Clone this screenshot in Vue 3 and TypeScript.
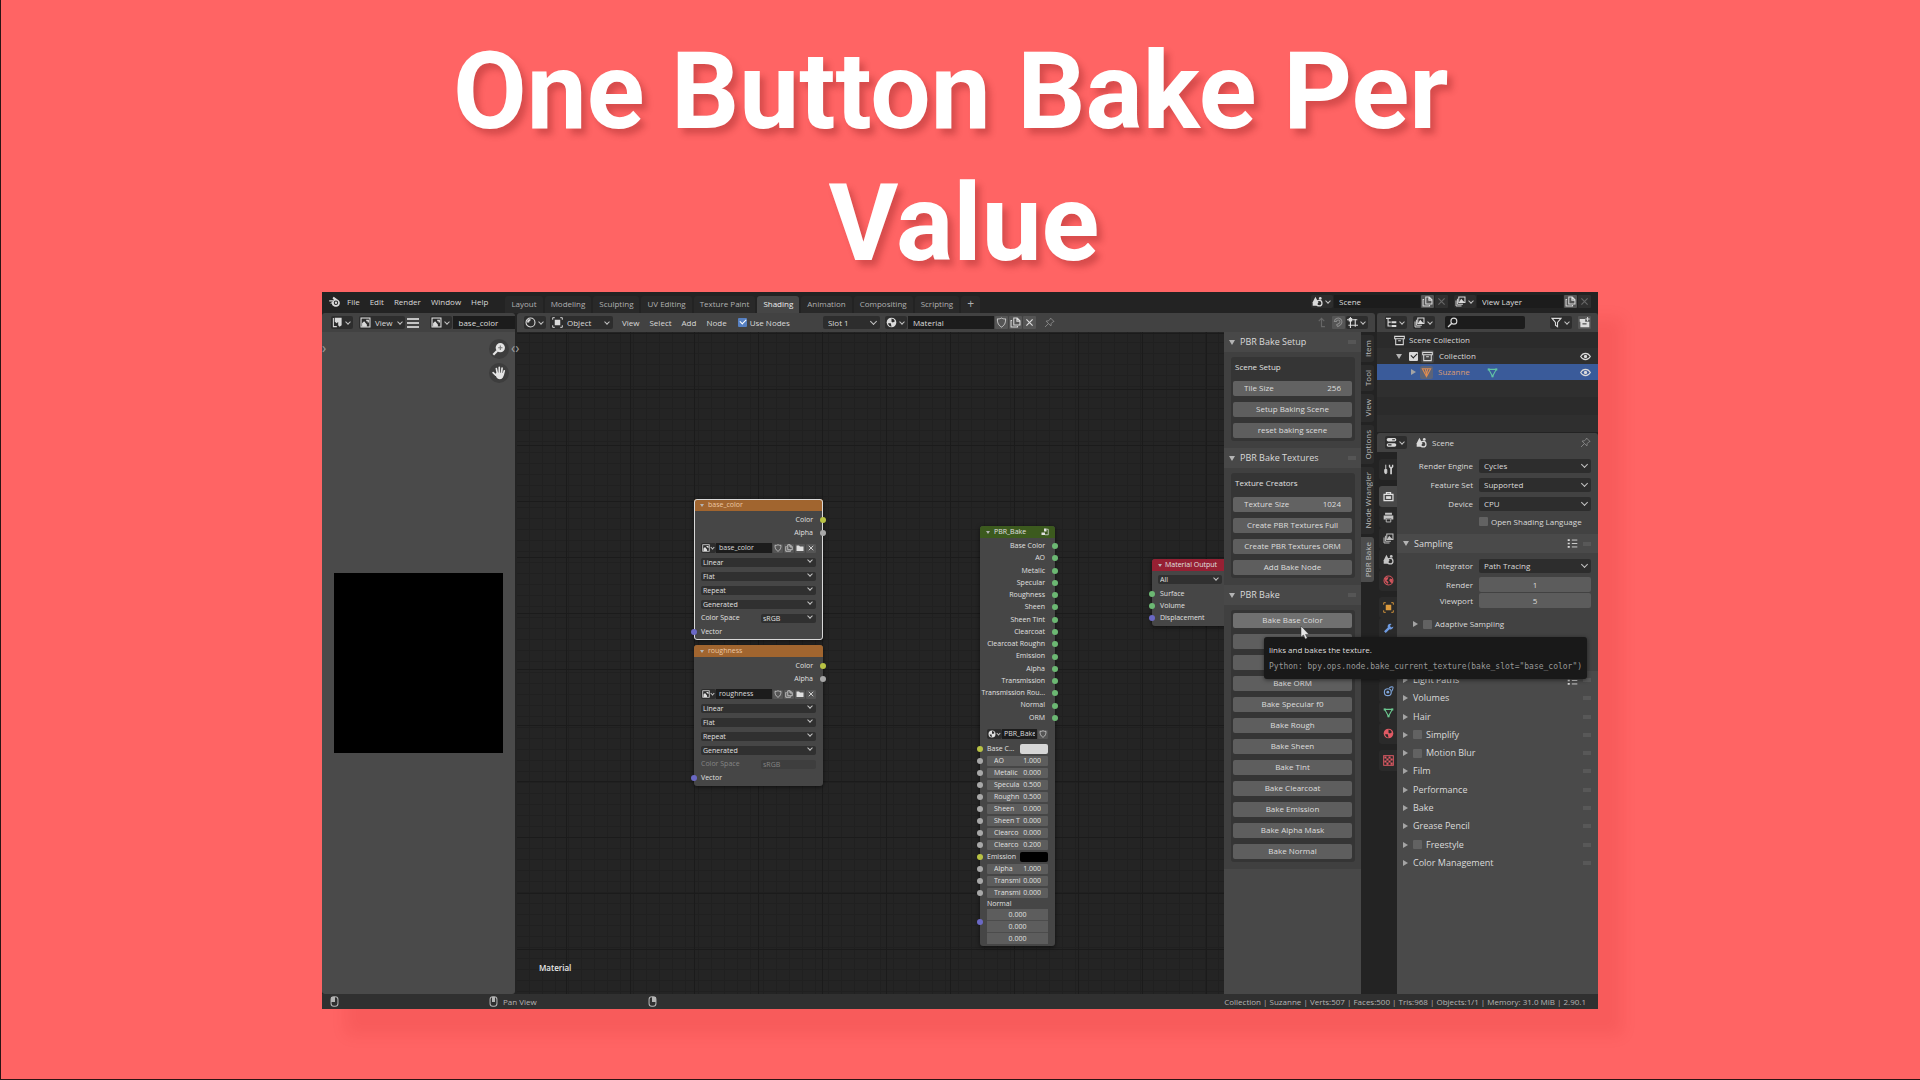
<script setup lang="ts">
import { ref } from 'vue'

interface Socket { label: string; value?: string; kind: 'value' | 'color' | 'link'; swatch?: string }
interface TextureNode { name: string; top: number; selected: boolean; space: boolean }
interface Section { label: string; check?: boolean; preset?: boolean }

const menus = ['File', 'Edit', 'Render', 'Window', 'Help']
const workspaces = ['Layout', 'Modeling', 'Sculpting', 'UV Editing', 'Texture Paint', 'Shading', 'Animation', 'Compositing', 'Scripting']
const nodeMenus = ['View', 'Select', 'Add', 'Node']
const sidebarTabs = ['Item', 'Tool', 'View', 'Options', 'Node Wrangler', 'PBR Bake']
const useNodes = ref(true)
const collectionOn = ref(true)

const textureNodes: TextureNode[] = [
  { name: 'base_color', top: 167, selected: true, space: true },
  { name: 'roughness', top: 313, selected: false, space: false },
]
const textureOptions = ['Linear', 'Flat', 'Repeat', 'Generated']

const bakeOutputs = ['Base Color', 'AO', 'Metalic', 'Specular', 'Roughness', 'Sheen', 'Sheen Tint', 'Clearcoat', 'Clearcoat Roughn', 'Emission', 'Alpha', 'Transmission', 'Transmission Rou...', 'Normal', 'ORM']
const bakeInputs: Socket[] = [
  { label: 'Base C...', kind: 'color', swatch: '#d6d6d6' },
  { label: 'AO', value: '1.000', kind: 'value' },
  { label: 'Metalic', value: '0.000', kind: 'value' },
  { label: 'Specula', value: '0.500', kind: 'value' },
  { label: 'Roughn', value: '0.500', kind: 'value' },
  { label: 'Sheen', value: '0.000', kind: 'value' },
  { label: 'Sheen T', value: '0.000', kind: 'value' },
  { label: 'Clearco', value: '0.000', kind: 'value' },
  { label: 'Clearco', value: '0.200', kind: 'value' },
  { label: 'Emission', kind: 'color', swatch: '#000000' },
  { label: 'Alpha', value: '1.000', kind: 'value' },
  { label: 'Transmi', value: '0.000', kind: 'value' },
  { label: 'Transmi', value: '0.000', kind: 'value' },
]
const outputInputs = [
  { label: 'Surface', color: 'green' },
  { label: 'Volume', color: 'green' },
  { label: 'Displacement', color: 'purple' },
]

const bakeButtons = ['', '', 'Bake ORM', 'Bake Specular f0', 'Bake Rough', 'Bake Sheen', 'Bake Tint', 'Bake Clearcoat', 'Bake Emission', 'Bake Alpha Mask', 'Bake Normal']

const propertyTabs = [
  [{ icon: 'tool', color: '#d0d0d0' }],
  [
    { icon: 'render', color: '#e0e0e0', active: true },
    { icon: 'output', color: '#c4c4c4' },
    { icon: 'layers', color: '#c4c4c4' },
    { icon: 'scene', color: '#c4c4c4' },
    { icon: 'world', color: '#d0545c' },
  ],
  [
    { icon: 'object', color: '#dc9a3c' },
    { icon: 'wrench', color: '#6f9be0' },
    { icon: 'constraint', color: '#7ea4d8' },
    { icon: 'constraint', color: '#7ea4d8' },
    { icon: 'constraint', color: '#7ea4d8' },
    { icon: 'mesh', color: '#6cc890' },
    { icon: 'material', color: '#e05a64' },
  ],
  [{ icon: 'texture', color: '#e05a64' }],
]
const renderFields = [
  { id: 'engine', label: 'Render Engine', value: 'Cycles' },
  { id: 'feature', label: 'Feature Set', value: 'Supported' },
  { id: 'device', label: 'Device', value: 'CPU' },
]
const sections: Section[] = [
  { label: 'Light Paths', preset: true },
  { label: 'Volumes' },
  { label: 'Hair' },
  { label: 'Simplify', check: true },
  { label: 'Motion Blur', check: true },
  { label: 'Film' },
  { label: 'Performance' },
  { label: 'Bake' },
  { label: 'Grease Pencil' },
  { label: 'Freestyle', check: true },
  { label: 'Color Management' },
]
</script>

<template>
  <svg class="defs" aria-hidden="true">
    <symbol id="blender" viewBox="0 0 16 16">
      <path d="M7 2l6 4.600a5 4.600 0 1 1-8.400 3.800H2.500L6 8H1.500V6.500h6L5.500 4z" fill="currentColor" />
      <circle cx="9.800" cy="9.600" r="2.700" fill="#232323" /><circle cx="9.800" cy="9.600" r="1.500" fill="currentColor" />
    </symbol>
    <symbol id="image" viewBox="0 0 16 16">
      <rect x="1.500" y="1.500" width="13" height="13" fill="none" stroke="currentColor" stroke-width="1.600" />
      <path d="M3 14V9l3-3 4 5v3zM9 4h4v4h-2V6H9z" fill="currentColor" />
    </symbol>
    <symbol id="imgedit" viewBox="0 0 16 16">
      <path d="M2 1.500v12.500h5" fill="none" stroke="currentColor" stroke-width="1.500" />
      <path d="M4 1h10v11l-3 2-2-2V7l-2 2-3-2z" fill="currentColor" />
    </symbol>
    <symbol id="sphere" viewBox="0 0 16 16">
      <circle cx="8" cy="8" r="6.500" fill="none" stroke="currentColor" stroke-width="1.600" />
      <path d="M8 3a5 5 0 0 0-5 5h3a3 3 0 0 1 2-3z" fill="currentColor" />
    </symbol>
    <symbol id="objmode" viewBox="0 0 16 16">
      <rect x="4" y="4" width="8" height="8" fill="currentColor" />
      <path d="M1 4V1h3M12 1h3v3M15 12v3h-3M4 15H1v-3" fill="none" stroke="currentColor" stroke-width="1.400" />
    </symbol>
    <symbol id="material" viewBox="0 0 16 16">
      <circle cx="8" cy="8" r="7" fill="currentColor" />
      <path d="M8 2a6 6 0 0 1 5 4l-3 2-2-1zM3 9l4 0 1 5a6 6 0 0 1-5-5z" fill="#2a2a2a" />
    </symbol>
    <symbol id="shield" viewBox="0 0 16 16">
      <path d="M8 1.500c2 1.200 4 1.400 6 1.200 0 5-1 9-6 12-5-3-6-7-6-12 2 .2 4 0 6-1.200z" fill="none" stroke="currentColor" stroke-width="1.300" />
    </symbol>
    <symbol id="copy" viewBox="0 0 16 16">
      <path d="M5.500 1.500h5l4 4v6h-9z M10 2v4h4" fill="none" stroke="currentColor" stroke-width="1.500" />
      <path d="M3 5H1.500v9.500H11V13" fill="none" stroke="currentColor" stroke-width="1.500" />
    </symbol>
    <symbol id="folder" viewBox="0 0 16 16"><path d="M1 3h5l2 2h7v9H1z" fill="currentColor" /></symbol>
    <symbol id="close" viewBox="0 0 16 16"><path d="M3.500 3.500l9 9M12.500 3.500l-9 9" stroke="currentColor" stroke-width="1.700" /></symbol>
    <symbol id="pin" viewBox="0 0 16 16">
      <path d="M9.500 1.500l5 5-1.500.5-2.500 2.500-.5 3.500-7-7L6.500 5.500 9 3zM6 10l-4.500 4.500" fill="none" stroke="currentColor" stroke-width="1.300" />
    </symbol>
    <symbol id="up" viewBox="0 0 16 16"><path d="M4 6l4-4 4 4M8 2v12H13" fill="none" stroke="currentColor" stroke-width="1.700" /></symbol>
    <symbol id="magnet" viewBox="0 0 16 16">
      <path d="M2 6.500a5.500 5.500 0 1 1 8 5.500l-3 2-1.800-2.500 3-2A2.600 2.600 0 1 0 5 6.500z" fill="none" stroke="currentColor" stroke-width="1.500" />
    </symbol>
    <symbol id="snap" viewBox="0 0 16 16">
      <path d="M5 0v16M12 3v11M0 4h15M2 12h14" stroke="currentColor" stroke-width="1.600" /><rect x="2.500" y="1.500" width="5" height="5" fill="currentColor" />
    </symbol>
    <symbol id="scene" viewBox="0 0 16 16">
      <path d="M5 1l4 8-2 5H1V9z" fill="currentColor" />
      <circle cx="10.500" cy="10.500" r="4" fill="none" stroke="currentColor" stroke-width="1.800" /><circle cx="12" cy="3.500" r="2" fill="currentColor" />
    </symbol>
    <symbol id="layers" viewBox="0 0 16 16">
      <path d="M5.500 1.500h9v8h-9z" fill="none" stroke="currentColor" stroke-width="1.500" />
      <path d="M3.500 4v8h8M1.500 6.500v8h8" fill="none" stroke="currentColor" stroke-width="1.400" /><path d="M6 9l3-5 2 2 3 3z" fill="currentColor" />
    </symbol>
    <symbol id="tree" viewBox="0 0 16 16">
      <path d="M0 2h7M3 2v11h4M3 7.500h4" fill="none" stroke="currentColor" stroke-width="1.600" /><path d="M8 6h7v3H8zM8 11.500h7v3H8z" fill="currentColor" />
    </symbol>
    <symbol id="search" viewBox="0 0 16 16"><circle cx="10" cy="6" r="4.300" fill="none" stroke="currentColor" stroke-width="1.600" /><path d="M7 9l-5.500 5.500" stroke="currentColor" stroke-width="2" /></symbol>
    <symbol id="filter" viewBox="0 0 16 16"><path d="M1.500 2h13L9.500 8v6L6.500 12V8z" fill="none" stroke="currentColor" stroke-width="1.600" /></symbol>
    <symbol id="newcol" viewBox="0 0 16 16">
      <path d="M1 3h8v4h6v8H2V7H1z" fill="currentColor" /><path d="M5 9h6M12.500 0v6M9.500 3h6" stroke="currentColor" stroke-width="1.500" /><path d="M5 10h6" stroke="#333" stroke-width="1.500" />
    </symbol>
    <symbol id="box" viewBox="0 0 16 16">
      <path d="M1 2h14v3.500H1zM2.500 5.500v8.500h11V5.500M6 8.500h4" fill="none" stroke="currentColor" stroke-width="1.500" />
    </symbol>
    <symbol id="eye" viewBox="0 0 16 16">
      <path d="M1 8c3.500-6 10.500-6 14 0-3.500 6-10.500 6-14 0z" fill="none" stroke="currentColor" stroke-width="1.700" /><circle cx="8" cy="8" r="2.400" fill="currentColor" />
    </symbol>
    <symbol id="mesh" viewBox="0 0 16 16">
      <path d="M2.500 3.500h11L8 13.500z" fill="none" stroke="currentColor" stroke-width="1.600" />
      <path d="M1 2h3v3H1zM12 2h3v3h-3zM6.500 12h3v3h-3z" fill="currentColor" />
    </symbol>
    <symbol id="suzanne" viewBox="0 0 16 16"><path d="M2 2.500h12L8 14z M6 2.500L8 10l2-7.500" fill="none" stroke="currentColor" stroke-width="1.600" /></symbol>
    <symbol id="props" viewBox="0 0 16 16">
      <rect x="1" y="1.500" width="14" height="5" rx="2.500" fill="currentColor" /><rect x="1" y="9" width="14" height="5" rx="2.500" fill="currentColor" />
      <path d="M9 4h4M3 11.500h5" stroke="#2a2a2a" stroke-width="1.800" />
    </symbol>
    <symbol id="tool" viewBox="0 0 16 16">
      <path d="M4 1v7M2.500 8h3v4.500a1.500 1.500 0 0 1-3 0z" stroke="currentColor" stroke-width="1.400" fill="currentColor" />
      <path d="M8.500 1v3.500l2 2V15h2.500V6.500l2-2V1l-2 0v3h-2.500V1z" fill="currentColor" />
    </symbol>
    <symbol id="render" viewBox="0 0 16 16">
      <path d="M1.500 5h13v9h-13zM5 5V2.500h6V5" fill="none" stroke="currentColor" stroke-width="1.800" /><path d="M4.500 7.500h7v4h-7z" fill="currentColor" />
    </symbol>
    <symbol id="output" viewBox="0 0 16 16">
      <path d="M3 1h10v3H3zM1 5h14v6h-3V9H4v2H1z" fill="currentColor" /><path d="M4.700 10h6.600v4.500H4.700z" fill="none" stroke="currentColor" stroke-width="1.300" />
    </symbol>
    <symbol id="world" viewBox="0 0 16 16">
      <circle cx="8" cy="8" r="6.500" fill="none" stroke="currentColor" stroke-width="1.600" /><path d="M3 4l5-1-1 3-2 2 3 2-1 3-4-4zM10 5l4 1v4l-2 2-3-4z" fill="currentColor" />
    </symbol>
    <symbol id="object" viewBox="0 0 16 16">
      <rect x="4" y="4" width="8" height="8" fill="currentColor" /><path d="M1 4V1h3M12 1h3v3M15 12v3h-3M4 15H1v-3" fill="none" stroke="currentColor" stroke-width="1.300" />
    </symbol>
    <symbol id="wrench" viewBox="0 0 16 16"><path d="M11 1a4 4 0 0 0-4 5.500L1.500 12 4 14.500 9.500 9A4 4 0 0 0 15 5l-2.500 1.500-2.500-2L12.500 1.500z" fill="currentColor" /></symbol>
    <symbol id="constraint" viewBox="0 0 16 16">
      <circle cx="7" cy="9" r="5" fill="none" stroke="currentColor" stroke-width="1.700" /><circle cx="7" cy="9" r="2" fill="currentColor" />
      <path d="M9 3c2-2 5-2 5.500-1.500S14 6 12.500 8" fill="none" stroke="currentColor" stroke-width="1.600" />
    </symbol>
    <symbol id="texture" viewBox="0 0 16 16">
      <rect x="1" y="1" width="14" height="14" fill="none" stroke="currentColor" stroke-width="1.400" />
      <path d="M2 2h3v3H2zM8 2h3v3H8zM5 5h3v3H5zM11 5h3v3h-3zM2 8h3v3H2zM8 8h3v3H8zM5 11h3v3H5zM11 11h3v3h-3z" fill="currentColor" />
    </symbol>
    <symbol id="zoomin" viewBox="0 0 16 16"><circle cx="9.500" cy="6.500" r="5.300" fill="currentColor" /><path d="M6 10l-4.500 4.500" stroke="currentColor" stroke-width="2.600" /><path d="M9.500 4v5M7 6.500h5" stroke="#777" stroke-width="1.200" /></symbol>
    <symbol id="hand" viewBox="0 0 16 16">
      <path d="M1.300 7.500l3 3M5 3l1.200 6M8.300 1.500v7M11.500 2.500L10.800 9M14 5.500L12.800 10" stroke="currentColor" stroke-width="1.900" stroke-linecap="round" />
      <path d="M3.500 9.500l2-2 8 .5c0 4-1 7-4.500 7S5 12.500 3.500 9.500z" fill="currentColor" />
    </symbol>
    <symbol id="nodegroup" viewBox="0 0 16 16"><path d="M6 1h5v6H6zM1 9h7v5H1z" fill="currentColor" /><path d="M11 2.500h3.500v11H8" fill="none" stroke="currentColor" stroke-width="1.500" /></symbol>
    <symbol id="presets" viewBox="0 0 16 16"><path d="M1 3h3M1 8h3M1 13h3" stroke="currentColor" stroke-width="2.400" /><path d="M7 3h8M7 8h8M7 13h8" stroke="currentColor" stroke-width="1.300" /></symbol>
    <symbol id="mouse" viewBox="0 0 16 16"><rect x="3" y="1" width="10" height="14" rx="4" fill="none" stroke="currentColor" stroke-width="1.500" /></symbol>
  </svg>

  <main class="stage">
    <h1 class="title">One Button Bake Per&nbsp;<br />Value</h1>

    <div class="window">
      <header class="topbar">
        <svg class="ic logo"><use href="#blender" /></svg>
        <nav class="menus"><button v-for="m in menus" :key="m" class="plain">{{ m }}</button></nav>
        <nav class="spaces">
          <button v-for="w in workspaces" :key="w" class="space" :class="{ on: w === 'Shading' }">{{ w }}</button>
          <button class="space plus">+</button>
        </nav>
        <div class="picker push">
          <button class="icdd" aria-label="Scene list"><svg class="ic"><use href="#scene" /></svg><i class="chev" /></button>
          <input class="name" value="Scene" aria-label="Scene" />
          <button class="sq" aria-label="New scene"><svg class="ic"><use href="#copy" /></svg></button>
          <button class="sq faded" aria-label="Delete scene"><svg class="ic"><use href="#close" /></svg></button>
        </div>
        <div class="picker last">
          <button class="icdd" aria-label="View layer list"><svg class="ic"><use href="#layers" /></svg><i class="chev" /></button>
          <input class="name" value="View Layer" aria-label="View layer" />
          <button class="sq" aria-label="New view layer"><svg class="ic"><use href="#copy" /></svg></button>
          <button class="sq faded" aria-label="Delete view layer"><svg class="ic"><use href="#close" /></svg></button>
        </div>
      </header>

      <div class="editors">
        <section class="imgeditor">
          <header class="edhead">
            <button class="icdd" aria-label="Editor type"><svg class="ic"><use href="#imgedit" /></svg><i class="chev" /></button>
            <button class="icdd wide"><svg class="ic"><use href="#image" /></svg>View<i class="chev" /></button>
            <button class="burger" aria-label="Menu"><i /><i /><i /></button>
            <div class="picker imgpick">
              <button class="icdd" aria-label="Image list"><svg class="ic"><use href="#image" /></svg><i class="chev" /></button>
              <input class="name" value="base_color" aria-label="Image" />
            </div>
          </header>
          <div class="imgbody">
            <span class="edge left">›</span>
            <div class="gizmos">
              <button class="gizmo" aria-label="Zoom"><svg><use href="#zoomin" /></svg></button>
              <button class="gizmo" aria-label="Pan"><svg><use href="#hand" /></svg></button>
            </div>
            <div class="texture" />
          </div>
        </section>

        <section class="shader">
          <header class="edhead">
            <button class="icdd" aria-label="Editor type"><svg class="ic"><use href="#sphere" /></svg><i class="chev" /></button>
            <button class="icdd mode"><svg class="ic"><use href="#objmode" /></svg>Object<i class="chev" /></button>
            <nav class="menus"><button v-for="m in nodeMenus" :key="m" class="plain">{{ m }}</button></nav>
            <label class="tick usenodes"><input v-model="useNodes" type="checkbox" />Use Nodes</label>
            <label class="dd slot"><select aria-label="Slot"><option>Slot 1</option></select></label>
            <div class="picker">
              <button class="icdd" aria-label="Material list"><svg class="ic"><use href="#material" /></svg><i class="chev" /></button>
              <input class="name" value="Material" aria-label="Material" />
              <button class="sq" aria-label="Fake user"><svg class="ic"><use href="#shield" /></svg></button>
              <button class="sq" aria-label="New material"><svg class="ic"><use href="#copy" /></svg></button>
              <button class="sq" aria-label="Unlink material"><svg class="ic"><use href="#close" /></svg></button>
            </div>
            <svg class="ic dim"><use href="#pin" /></svg>
            <svg class="ic faint push"><use href="#up" /></svg>
            <div class="picker snap">
              <button class="sq" aria-label="Snap"><svg class="ic dim"><use href="#magnet" /></svg></button>
              <button class="icdd" aria-label="Snap to"><svg class="ic"><use href="#snap" /></svg><i class="chev" /></button>
            </div>
          </header>

          <div class="shaderbody">
            <div class="canvas">
              <span class="edge toggle">‹›</span>

              <article v-for="n in textureNodes" :key="n.name" class="node tex" :class="{ selected: n.selected }" :style="{ top: n.top + 'px' }">
                <h2 class="nodehead orange"><i class="tri" />{{ n.name }}</h2>
                <div class="texouts">
                  <p class="out">Color<i class="dot yellow" /></p>
                  <p class="out">Alpha<i class="dot gray" /></p>
                </div>
                <div class="nrow imgrow">
                  <button class="icdd" aria-label="Image list"><svg class="ic"><use href="#image" /></svg><i class="chev" /></button>
                  <input class="name" :value="n.name" aria-label="Image" />
                  <button v-for="g in ['shield', 'copy', 'folder', 'close']" :key="g" class="sq" :aria-label="g"><svg class="ic"><use :href="'#' + g" /></svg></button>
                </div>
                <div v-for="o in textureOptions" :key="o" class="nrow"><label class="dd"><select :aria-label="o"><option>{{ o }}</option></select></label></div>
                <div class="nrow" :class="{ off: !n.space }">
                  <label :for="'space-' + n.name" class="spacelabel">Color Space</label>
                  <span class="dd spacedd"><select :id="'space-' + n.name"><option>sRGB</option></select></span>
                </div>
                <p class="nrow">Vector<i class="dot purple in" /></p>
              </article>

              <article class="node bake">
                <h2 class="nodehead green"><i class="tri" />PBR_Bake<svg class="ic"><use href="#nodegroup" /></svg></h2>
                <div class="outs"><p v-for="o in bakeOutputs" :key="o" class="out">{{ o }}<i class="dot green" /></p></div>
                <div class="group">
                  <button class="icdd" aria-label="Group list"><svg class="ic"><use href="#material" /></svg><i class="chev" /></button>
                  <input class="name" value="PBR_Bake" aria-label="Node group" />
                  <button class="sq" aria-label="Users"><svg class="ic"><use href="#shield" /></svg></button>
                </div>
                <div v-for="(s, i) in bakeInputs" :key="i" class="inrow">
                  <i class="dot in" :class="s.kind === 'color' ? 'yellow' : 'gray'" />
                  <template v-if="s.kind === 'color'">
                    <label :for="'sock' + i">{{ s.label }}</label>
                    <button :id="'sock' + i" class="swatch" :style="{ background: s.swatch }" />
                  </template>
                  <label v-else class="num"><span>{{ s.label }}</span><input :value="s.value" /></label>
                </div>
                <div class="normal">
                  <p>Normal</p>
                  <div class="vec"><input v-for="k in 3" :key="k" value="0.000" aria-label="Normal component" /></div>
                  <i class="dot purple in" />
                </div>
              </article>

              <article class="node matout">
                <h2 class="nodehead red"><i class="tri" />Material Output</h2>
                <div class="nrow first"><label class="dd"><select aria-label="Target"><option>All</option></select></label></div>
                <p v-for="o in outputInputs" :key="o.label" class="mrow">{{ o.label }}<i class="dot in" :class="o.color" /></p>
              </article>

              <strong class="matname">Material</strong>
            </div>

            <aside class="sidebar">
              <h2 class="phead"><i class="tri" />PBR Bake Setup<i class="grip" /></h2>
              <div class="pbody"><div class="pbox">
                <p class="plabel">Scene Setup</p>
                <label class="num"><span>Tile Size</span><input value="256" /></label>
                <button class="btn">Setup Baking Scene</button>
                <button class="btn">reset baking scene</button>
              </div></div>
              <h2 class="phead"><i class="tri" />PBR Bake Textures<i class="grip" /></h2>
              <div class="pbody"><div class="pbox">
                <p class="plabel">Texture Creators</p>
                <label class="num"><span>Texture Size</span><input value="1024" /></label>
                <button class="btn">Create PBR Textures Full</button>
                <button class="btn">Create PBR Textures ORM</button>
                <button class="btn">Add Bake Node</button>
              </div></div>
              <h2 class="phead"><i class="tri" />PBR Bake<i class="grip" /></h2>
              <div class="pbody"><div class="pbox">
                <div class="hovered">
                  <button class="btn hot">Bake Base Color</button>
                  <svg class="cursor" viewBox="0 0 9 14"><path d="M1 0v11l2.500-2 1.800 4 2-1-1.800-3.600H9z" fill="#e6e6e6" stroke="#333" stroke-width=".5" /></svg>
                  <div class="tooltip" role="tooltip">
                    <p>links and bakes the texture.</p>
                    <code>Python: bpy.ops.node.bake_current_texture(bake_slot="base_color")</code>
                  </div>
                </div>
                <button v-for="(b, i) in bakeButtons" :key="i" class="btn">{{ b }}</button>
              </div></div>
            </aside>

            <nav class="sidetabs"><button v-for="t in sidebarTabs" :key="t" :class="{ on: t === 'PBR Bake' }"><span>{{ t }}</span></button></nav>
          </div>
        </section>

        <div class="rightcol">
          <section class="outliner">
            <header class="edhead">
              <button class="icdd" aria-label="Editor type"><svg class="ic"><use href="#tree" /></svg><i class="chev" /></button>
              <button class="icdd" aria-label="Display mode"><svg class="ic"><use href="#layers" /></svg><i class="chev" /></button>
              <label class="search"><svg class="ic"><use href="#search" /></svg><input aria-label="Search" /></label>
              <button class="icdd push" aria-label="Filter"><svg class="ic"><use href="#filter" /></svg><i class="chev" /></button>
              <button class="sq" aria-label="New collection"><svg class="ic"><use href="#newcol" /></svg></button>
            </header>
            <ul class="tree">
              <li class="d0"><svg class="ic"><use href="#box" /></svg>Scene Collection</li>
              <li class="d1"><i class="tri" /><input v-model="collectionOn" type="checkbox" class="white" aria-label="Collection" /><span class="chip"><svg class="ic"><use href="#box" /></svg></span>Collection<svg class="ic eye"><use href="#eye" /></svg></li>
              <li class="d2"><i class="tri side" /><span class="chip orange"><svg class="ic"><use href="#suzanne" /></svg></span><span class="orangetext">Suzanne</span><svg class="ic meshic"><use href="#mesh" /></svg><svg class="ic eye"><use href="#eye" /></svg></li>
              <li /><li /><li />
            </ul>
          </section>

          <section class="properties">
            <header class="edhead">
              <button class="icdd" aria-label="Editor type"><svg class="ic"><use href="#props" /></svg><i class="chev" /></button>
              <svg class="ic"><use href="#scene" /></svg><span>Scene</span>
              <svg class="ic dim push"><use href="#pin" /></svg>
            </header>
            <div class="propmain">
              <nav class="ptabs">
                <div v-for="(g, i) in propertyTabs" :key="i">
                  <button v-for="(t, j) in g" :key="j" :class="{ on: 'active' in t }" :style="{ color: t.color }" :aria-label="t.icon"><svg class="ic"><use :href="'#' + t.icon" /></svg></button>
                </div>
              </nav>
              <div class="pcontent">
                <div class="fields">
                  <div v-for="f in renderFields" :key="f.id" class="field">
                    <label :for="f.id">{{ f.label }}</label>
                    <span class="dd"><select :id="f.id"><option>{{ f.value }}</option></select></span>
                  </div>
                  <label class="tick osl"><input type="checkbox" />Open Shading Language</label>
                </div>
                <h3 class="section"><i class="tri" />Sampling<svg class="ic preset"><use href="#presets" /></svg><i class="grip" /></h3>
                <div class="sub">
                  <div class="field"><label for="integrator">Integrator</label><span class="dd"><select id="integrator"><option>Path Tracing</option></select></span></div>
                  <div class="samples">
                    <label for="rs">Render</label><input id="rs" value="1" />
                    <label for="vs">Viewport</label><input id="vs" value="5" />
                  </div>
                  <div class="adaptive"><i class="tri side" /><label class="tick"><input type="checkbox" />Adaptive Sampling</label></div>
                </div>
                <div class="sections">
                  <h3 v-for="s in sections" :key="s.label" class="section">
                    <i class="tri side" />
                    <label v-if="s.check" class="tick"><input type="checkbox" />{{ s.label }}</label>
                    <template v-else>{{ s.label }}</template>
                    <svg v-if="s.preset" class="ic preset"><use href="#presets" /></svg><i class="grip" />
                  </h3>
                </div>
              </div>
            </div>
          </section>
        </div>
      </div>

      <footer class="status">
        <span class="hint"><svg class="ic"><use href="#mouse" /></svg><i class="press l" /></span>
        <span class="hint"><svg class="ic"><use href="#mouse" /></svg><i class="press m" />Pan View</span>
        <span class="hint"><svg class="ic"><use href="#mouse" /></svg><i class="press r" /></span>
        <span class="stats">Collection | Suzanne | Verts:507 | Faces:500 | Tris:968 | Objects:1/1 | Memory: 31.0 MiB | 2.90.1</span>
      </footer>
    </div>
  </main>
</template>

<style>
body { margin: 0; background: #ff6464; }
</style>

<style scoped>
* { box-sizing: border-box; }
.defs { position: absolute; width: 0; height: 0; }
h1, h2, h3, p, ul { margin: 0; padding: 0; }
button, input, select { font: inherit; color: inherit; border: 0; margin: 0; padding: 0; background: none; min-width: 0; }
select { appearance: none; width: 100%; height: 100%; outline: none; }
svg { flex: none; }

.stage { min-height: 100vh; display: flex; flex-direction: column; padding: 26px 322px 70px 321px; background: #ff6464; border-left: 1px solid #2b1414; border-bottom: 1px solid #2b1414; }
.title { height: 266px; padding-left: 8px; text-align: center; font: 700 107px/132px Roboto, sans-serif; color: #fff; text-shadow: 5px 6px 6px rgba(120, 20, 20, .3); white-space: nowrap; }
.window { flex: 1; display: flex; flex-direction: column; background: #232323; color: #dadada; font: 8px/12px "Open Sans", "Noto Sans", sans-serif; box-shadow: 24px 26px 14px rgba(190, 20, 20, .1); }

.ic { width: 11px; height: 11px; display: block; }
.push { margin-left: auto; }
.dim { color: #8a8a8a; }
.faint { color: #666; }
.chev { width: 4px; height: 4px; margin: 0 2px 2px; border: solid #c4c4c4; border-width: 0 1px 1px 0; transform: rotate(45deg); flex: none; }
.tri { width: 0; height: 0; border: 3px solid transparent; border-top: 5px solid #b4b4b4; border-bottom: 0; flex: none; }
.tri.side { border: 3px solid transparent; border-left: 5px solid #a4a4a4; border-right: 0; }
.grip { width: 8px; height: 4px; margin-left: auto; background: radial-gradient(circle, #777 0 1px, transparent 1px) 0 0 / 2px 2px; opacity: .3; }
.plain { white-space: nowrap; }
.icdd { display: flex; align-items: center; justify-content: center; gap: 1px; height: 13px; padding: 0 1px; background: #2d2d2d; border-radius: 2px; flex: none; }
.sq { display: flex; align-items: center; justify-content: center; width: 13px; height: 13px; background: #555; border-radius: 1px; flex: none; }
.sq.faded { background: #303030; color: #666; }
.name { width: 86px; height: 13px; padding: 0 5px; background: #1c1c1c; color: #dcdcdc; }
.picker { display: flex; gap: 1px; align-items: center; }
.dd { position: relative; display: block; background: #2d2d2d; border-radius: 2px; }
.dd select { display: block; padding: 0 5px; }
.dd::after { content: ""; position: absolute; right: 4px; top: 50%; width: 4px; height: 4px; margin-top: -4px; border: solid #c4c4c4; border-width: 0 1px 1px 0; transform: rotate(45deg); pointer-events: none; }
.tick { display: flex; align-items: center; gap: 3px; white-space: nowrap; }
.tick input, .white { appearance: none; width: 9px; height: 9px; background: #626262; border-radius: 1px; position: relative; flex: none; }
.tick input:checked { background: #5680c2; }
.white { background: #d8d8d8; }
.tick input:checked::after, .white:checked::after { content: ""; position: absolute; left: 2px; top: 1px; width: 5px; height: 3px; border: solid #fff; border-width: 0 0 1px 1px; transform: rotate(-45deg); }
.white:checked::after { border-color: #222; }

.topbar { height: 21px; display: flex; align-items: center; background: #232323; }
.logo { width: 13px; height: 13px; margin: 0 6px 2px; }
.menus { display: flex; gap: 10px; }
.topbar .menus, .topbar .picker { margin-bottom: 2px; }
.spaces { display: flex; gap: 2px; margin: 4px 0 0 17px; align-self: stretch; }
.space { padding: 0 6px 2px; background: #292929; color: #b0b0b0; border-radius: 3px 3px 0 0; white-space: nowrap; }
.space.on { background: #464646; color: #eee; }
.space.plus { font-size: 12px; }
.last { margin: 0 7px 0 6px; }

.editors { flex: 1; display: flex; gap: 2px; }
.edhead { height: 19px; display: flex; align-items: center; background: #424242; border-radius: 3px 3px 0 0; flex: none; }
.imgeditor { width: 193px; display: flex; flex-direction: column; flex: none; }
.imgeditor .edhead { padding-left: 9px; overflow: hidden; }
.wide { margin-left: 6px; gap: 4px; }
.burger { display: flex; flex-direction: column; align-items: stretch; gap: 2px; width: 12px; margin: 0 11px 0 2px; flex: none; }
.burger i { width: 12px; height: 2px; background: #c4c4c4; }
.imgpick { flex: 1; min-width: 0; }
.imgpick .name { flex: 1; width: 64px; }
.imgbody { flex: 1; position: relative; display: flex; flex-direction: column; background: #4a4a4a; border-radius: 0 0 3px 3px; }
.edge { position: absolute; font-size: 14px; line-height: 14px; color: #a0a0a0; z-index: 1; }
.edge.left { left: 0; top: 9px; }
.edge.toggle { left: -6px; top: 9px; }
.gizmos { display: flex; flex-direction: column; gap: 4px; align-self: flex-end; margin: 7px 6px 0 0; }
.gizmo { width: 20px; height: 20px; border-radius: 50%; background: #3d3d3d; display: flex; align-items: center; justify-content: center; color: #e4e4e4; }
.gizmo svg { width: 14px; height: 14px; }
.texture { width: 169px; height: 180px; margin: 190px 0 0 12px; background: #000; }

.shader { flex: 1; min-width: 0; display: flex; flex-direction: column; }
.shader .edhead { padding: 0 7px; }
.mode { width: 63px; margin: 0 9px 0 4px; gap: 4px; justify-content: flex-start; padding: 0 2px; }
.mode .chev { margin-left: auto; }
.usenodes { margin-left: 11px; }
.slot { width: 57px; height: 13px; margin: 0 5px 0 33px; }
.shader .edhead > .dim { margin-left: 8px; }
.snap { margin-left: 5px; }
.shaderbody { flex: 1; display: flex; background: #232323; }
.canvas {
  flex: 1; min-width: 0; position: relative; clip-path: inset(0 0 0 -8px);
  background:
    repeating-linear-gradient(90deg, transparent 0 49px, #1b1b1b 49px 50px, transparent 50px 64px),
    repeating-linear-gradient(180deg, transparent 0 1px, #1b1b1b 1px 2px, transparent 2px 56px),
    repeating-linear-gradient(90deg, transparent 0 12px, #202020 12px 13px),
    repeating-linear-gradient(180deg, transparent 0 10px, #202020 10px 11px), #242424;
}
.node { position: absolute; background: #464646; border-radius: 3px; font-size: 7px; line-height: 10px; color: #e0e0e0; box-shadow: 0 1px 4px rgba(0, 0, 0, .6); }
.node .ic { width: 8px; height: 8px; }
.node .chev, .node .dd::after { width: 3px; height: 3px; }
.node .chev { margin: 0 1px 1px; }
.nodehead { height: 12px; display: flex; align-items: center; gap: 4px; padding: 0 6px; font-size: 7px; font-weight: 400; border-radius: 3px 3px 0 0; white-space: nowrap; }
.nodehead .ic { margin-left: auto; }
.nodehead .tri { border-width: 2px; border-top-width: 3px; border-bottom: 0; }
.orange.nodehead { background: #a1652f; color: #ecc8a4; }
.green.nodehead { background: #3c5a1e; }
.red.nodehead { background: #962033; gap: 3px; }
.tex { left: 177px; width: 129px; height: 141px; }
.selected { outline: 1px solid #d8d8d8; outline-offset: -1px; }
.texouts { padding: 2px 0; }
.out { position: relative; height: 13px; line-height: 13px; padding-right: 10px; text-align: right; white-space: nowrap; }
.dot { position: absolute; right: -3px; top: 50%; width: 6px; height: 6px; margin-top: -3px; border-radius: 50%; }
.dot.in { right: auto; left: -3px; }
.yellow { background: #b8c244; }
.gray { background: #a8a8a8; }
.dot.green { background: #6cb873; }
.purple { background: #6a68c4; }
.nrow { position: relative; height: 14px; padding: 2px 7px; display: flex; align-items: center; }
.nrow .dd { flex: 1; height: 9px; background: #303030; }
.nrow .dd select { line-height: 9px; padding: 0 2px; }
.nrow .name { flex: 1; height: 10px; padding: 0 3px; }
.nrow .sq, .group .sq { width: 10px; height: 9px; margin-left: 1px; }
.nrow .icdd, .group .icdd { height: 10px; gap: 0; padding: 0 1px; }
.spacelabel { width: 60px; }
.off { color: #858585; }
.off .dd { background: #3e3e3e; }
.off .dd::after { display: none; }

.bake { left: 463px; top: 194px; width: 75px; padding-bottom: 2px; }
.outs { height: 187px; padding: 2px 0 1px; display: grid; grid-template-rows: repeat(15, 1fr); }
.outs .out { height: auto; line-height: 12px; }
.group { display: flex; height: 18px; align-items: center; padding: 0 7px; }
.group .name { flex: 1; height: 10px; padding: 0 2px; }
.inrow { position: relative; height: 12px; display: flex; align-items: center; padding: 0 7px; white-space: nowrap; }
.swatch { width: 28px; height: 10px; margin-left: auto; border-radius: 2px; }
.num { display: flex; align-items: center; width: 100%; background: #5d5d5d; border-radius: 2px; overflow: hidden; }
.num span { flex: 1; overflow: hidden; white-space: nowrap; }
.num input { width: 40%; text-align: right; }
.inrow .num { height: 10px; padding: 0 7px; border-radius: 1px; }
.inrow .num span { flex: 0 0 27px; }
.inrow .num input { flex: 1; width: 20px; }
.normal { position: relative; padding: 0 7px; }
.vec { display: grid; gap: 1px; background: #4c4c4c; }
.vec input { width: 100%; height: 11px; background: #5d5d5d; text-align: center; }
.matout { left: 635px; top: 227px; width: 74px; height: 67px; }
.matout .first { padding: 2px 4px 2px 6px; height: 17px; }
.mrow { position: relative; height: 12px; line-height: 12px; padding-left: 8px; }
.matname { position: absolute; left: 22px; bottom: 20px; color: #e8e8e8; font-weight: 600; }

.sidebar { width: 137px; background: #484848; flex: none; position: relative; z-index: 2; }
.phead { height: 20px; display: flex; align-items: center; gap: 5px; padding: 0 5px; background: #484848; font-size: 9px; font-weight: 400; }
.pbody { padding: 5px 6px 7px 7px; background: #404040; }
.pbox { display: flex; flex-direction: column; gap: 6px; padding: 3px 3px 3px 2px; background: #353535; border-radius: 3px; }
.plabel { height: 15px; line-height: 13px; padding-left: 2px; color: #e0e0e0; }
.btn, .pbox .num { height: 15px; width: 100%; padding-bottom: 1px; background: #5e5e5e; border-radius: 2px; color: #dedede; text-align: center; flex: none; display: block; }
.pbox .num { display: flex; padding: 0 11px 1px; text-align: left; background: #626262; }
.btn.hot { background: #707070; }
.hovered { position: relative; }
.cursor { position: absolute; left: 67px; top: 13px; width: 9px; height: 14px; z-index: 4; }
.tooltip { position: absolute; left: 31px; top: 24px; height: 42px; padding: 7px 5px; background: #191919; border-radius: 3px; white-space: nowrap; z-index: 3; box-shadow: 0 1px 4px rgba(0, 0, 0, .5); color: #dedede; }
.tooltip code { display: block; margin-top: 5px; font: 8px/12px "DejaVu Sans Mono", monospace; color: #989898; }
.sidetabs { width: 14px; display: flex; flex-direction: column; gap: 3px; padding-top: 3px; flex: none; }
.sidetabs button { writing-mode: vertical-rl; padding: 5px 0; width: 13px; background: #2b2b2b; border-radius: 0 3px 3px 0; color: #bcbcbc; font-size: 8px; line-height: 13px; }
.sidetabs span { display: block; transform: rotate(180deg); }
.sidetabs .on { background: #4c4c4c; }

.rightcol { width: 221px; display: flex; flex-direction: column; gap: 1px; flex: none; }
.outliner { height: 119px; display: flex; flex-direction: column; background: #2b2b2b; }
.outliner .edhead { padding: 0 7px 0 8px; gap: 6px; }
.search { display: flex; align-items: center; width: 80px; height: 13px; margin-left: 4px; padding-left: 2px; background: #1c1c1c; border-radius: 2px; }
.search input { flex: 1; }
.tree { list-style: none; flex: 1; display: grid; grid-template-rows: 16px 16px 16px; grid-auto-rows: 1fr; }
.tree li { display: flex; align-items: center; gap: 4px; padding: 0 7px 0 17px; }
.tree li:nth-child(even) { background: #2f2f2f; }
.tree .d1 { padding-left: 19px; gap: 5px; }
.tree .d1 .white { margin-left: 2px; }
.tree .d1 .chip { margin-left: -2px; }
.tree li.d2 { padding-left: 34px; gap: 5px; background: #3a5b9a; }
.chip { background: #444; border-radius: 2px; padding: 1px; margin-left: -1px; }
.d2 .chip { background: #5c6478; color: #e08c50; }
.orangetext { color: #d99a72; }
.tree .eye { margin-left: auto; }
.meshic { margin-left: 12px; color: #62c4a4; }

.properties { flex: 1; display: flex; flex-direction: column; }
.properties .edhead { padding: 0 7px 0 8px; gap: 5px; }
.properties .edhead .icdd { margin-right: 4px; }
.propmain { flex: 1; display: flex; }
.ptabs { width: 20px; padding: 7px 0 0 2px; display: flex; flex-direction: column; gap: 6px; background: #232323; flex: none; }
.ptabs button { width: 18px; height: 21px; display: flex; align-items: center; justify-content: center; background: #2a2a2a; border-radius: 3px 0 0 3px; }
.ptabs .on { background: #484848; }
.pcontent { flex: 1; background: #4a4a4a; min-width: 0; }
.fields { height: 82px; padding-top: 4px; background: #424242; }
.field { display: flex; align-items: center; height: 19px; gap: 6px; padding-right: 7px; }
.field label { width: 76px; text-align: right; }
.field .dd { flex: 1; height: 14px; }
.osl { padding-left: 82px; height: 17px; gap: 3px; }
.section { height: 19px; display: flex; align-items: center; gap: 5px; padding: 0 7px 0 6px; font-size: 9px; font-weight: 400; }
.section .tick { gap: 4px; }
.preset { margin-left: auto; }
.preset + .grip { margin-left: 0; }
.sub { height: 118px; padding-top: 3px; background: #424242; }
.samples { display: grid; grid-template-columns: 76px 1fr; grid-auto-rows: 15px; column-gap: 6px; row-gap: 1px; margin: 2px 7px 0 0; align-items: center; text-align: right; }
.samples input { height: 15px; background: #5c5c5c; text-align: center; border-radius: 2px; }
.adaptive { display: flex; align-items: center; gap: 5px; height: 16px; margin: 8px 0 0 16px; }
.sections { height: 201px; display: grid; grid-auto-rows: 1fr; }
.sections .section { height: auto; }

.status { height: 15px; display: flex; align-items: center; background: #303030; color: #b4b4b4; padding: 0 12px 0 7px; }
.hint { position: relative; width: 159px; display: flex; align-items: center; gap: 4px; }
.press { position: absolute; left: 2px; top: 1px; width: 4px; height: 5px; background: #b4b4b4; }
.press.m { left: 4px; width: 3px; }
.press.r { left: 5px; }
.stats { margin-left: auto; white-space: nowrap; }
</style>
